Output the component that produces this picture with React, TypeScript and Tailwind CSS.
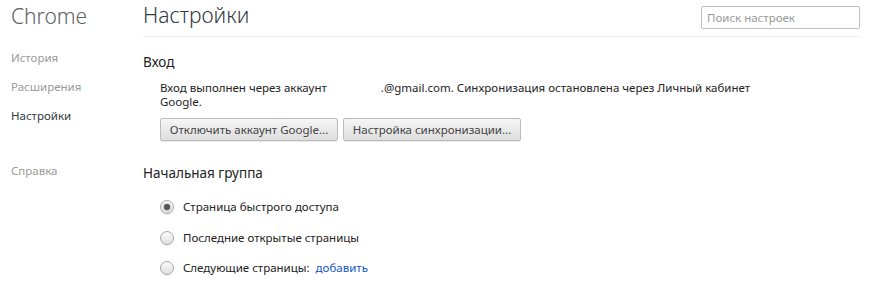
import React from "react";

const font = { fontFamily: '"Noto Sans", "Open Sans", sans-serif' };

function Radio({ checked }: { checked?: boolean }) {
  return (
    <span className="relative inline-flex h-[14px] w-[14px] shrink-0 items-center justify-center rounded-full border border-[#a9a9a9] bg-gradient-to-b from-[#fafafa] to-[#e0e0e0] shadow-[0_1px_1px_rgba(0,0,0,0.08)]">
      {checked && <span className="h-[6px] w-[6px] rounded-full bg-[#555] shadow-[0_0_0_1px_rgba(0,0,0,0.15)]" />}
    </span>
  );
}

export default function App() {
  return (
    <div className="flex h-[286px] w-[881px] bg-white text-[#303942]" style={font}>
      <aside className="w-[143px] shrink-0 pl-[11px]">
        <div className="pt-[2px] text-[21px] font-light leading-[28px] text-[#5c6166]">Chrome</div>
        <nav className="mt-[14px] flex flex-col text-[11.5px] leading-[16px]">
          <div className="py-[6px] text-[#999]">История</div>
          <div className="mt-[1px] py-[6px] text-[#999]">Расширения</div>
          <div className="mt-[1px] py-[6px] text-[#303942]">Настройки</div>
          <div className="mt-[27px] py-[6px] text-[#999]">Справка</div>
        </nav>
      </aside>
      <main className="flex-1 pr-[21px]">
        <header className="flex h-[37px] items-start justify-between border-b border-[#eee]">
          <h1 className="pt-[1px] text-[21px] font-light leading-[28px] text-[#303942]">Настройки</h1>
          <div className="mt-[6px] flex h-[23px] w-[159px] items-center rounded-[2px] border border-[#bfbfbf] px-[5px] text-[11.5px] text-[#999]">
            Поиск настроек
          </div>
        </header>
        <section className="pt-[15px]">
          <h3 className="text-[13.5px] leading-[20px] text-[#222]">Вход</h3>
          <div className="pl-[17px] pt-[9px] text-[11.5px] leading-[14px] text-[#222]">
            <p>
              Вход выполнен через аккаунт <span className="inline-block w-[51px]" />.@gmail.com. Синхронизация остановлена через Личный кабинет
              <br />
              Google.
            </p>
            <div className="mt-[9px] flex gap-[5px]">
              <button className="h-[23px] w-[178px] rounded-[2px] border border-[#bbb] bg-gradient-to-b from-[#f6f6f6] to-[#dedede] text-[11.5px] text-[#444] shadow-[0_1px_0_rgba(0,0,0,0.08)]">
                Отключить аккаунт Google...
              </button>
              <button className="h-[23px] w-[178px] rounded-[2px] border border-[#bbb] bg-gradient-to-b from-[#f6f6f6] to-[#dedede] text-[11.5px] text-[#444] shadow-[0_1px_0_rgba(0,0,0,0.08)]">
                Настройка синхронизации...
              </button>
            </div>
          </div>
        </section>
        <section className="pt-[22px]">
          <h3 className="text-[13.5px] leading-[20px] text-[#222]">Начальная группа</h3>
          <div className="flex flex-col pl-[17px] pt-[16px] text-[11.5px] text-[#222]">
            <label className="flex h-[16px] items-center gap-[9px]">
              <Radio checked />
              <span>Страница быстрого доступа</span>
            </label>
            <label className="mt-[15px] flex h-[16px] items-center gap-[9px]">
              <Radio />
              <span>Последние открытые страницы</span>
            </label>
            <label className="mt-[14px] flex h-[16px] items-center gap-[9px]">
              <Radio />
              <span>
                Следующие страницы:<span className="ml-[6px] text-[#15c]">добавить</span>
              </span>
            </label>
          </div>
        </section>
      </main>
    </div>
  );
}
